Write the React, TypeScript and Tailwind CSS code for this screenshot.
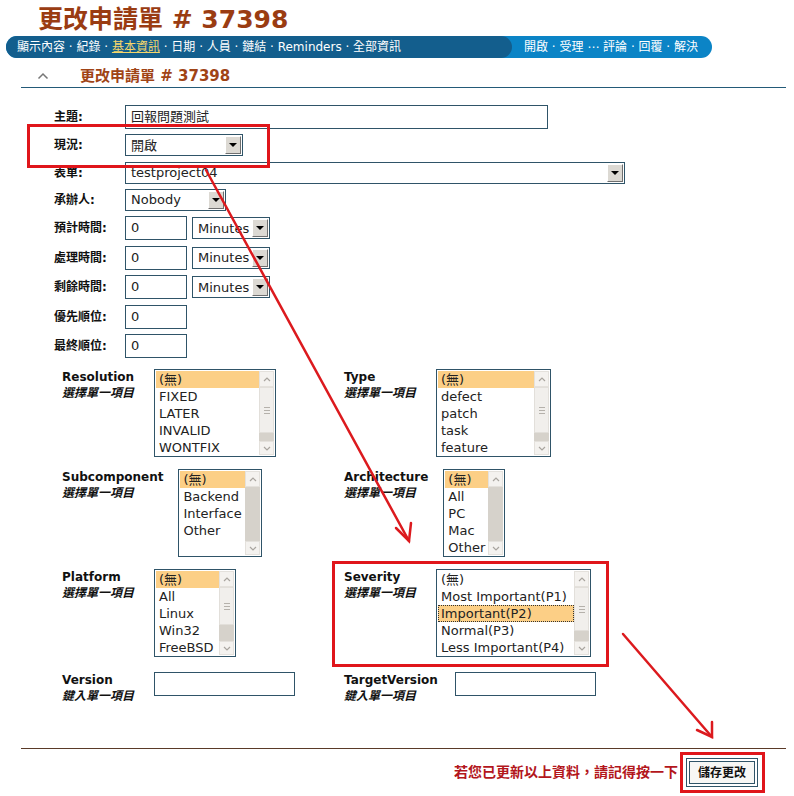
import React from 'react';

const FONT = 'font-[family-name:DejaVu_Sans,Noto_Sans_CJK_TC,sans-serif]';

function DropBtn() {
  return (
    <span className="flex h-[18px] w-[16px] shrink-0 items-center justify-center border border-t-white border-l-white border-r-[#6f6f6f] border-b-[#6f6f6f] bg-[#dcd9d3]">
      <span className="h-0 w-0 border-x-[4px] border-t-[4px] border-x-transparent border-t-black" />
    </span>
  );
}

function Select({ value, w }: { value: string; w: string }) {
  return (
    <div className={`flex h-[22px] items-center justify-between border border-[#2f5468] bg-white pl-[5px] pr-[1px] text-[13px] text-[#222] ${w}`}>
      <span className="leading-none">{value}</span>
      <DropBtn />
    </div>
  );
}

function TextBox({ value = '', w, h = 'h-[24px]' }: { value?: string; w: string; h?: string }) {
  return (
    <div className={`flex items-center border border-[#2f5468] bg-white pl-[5px] text-[13px] text-[#222] ${w} ${h}`}>
      {value}
    </div>
  );
}

type ListProps = {
  items: string[];
  w: string;
  sel?: number;
  dotted?: boolean;
  thumb?: string;
};

function ListBox({ items, w, sel = 0, dotted = false, thumb }: ListProps) {
  return (
    <div className={`flex h-[88px] shrink-0 border border-[#2f5468] bg-white p-px ${w}`}>
      <div className="flex min-w-0 flex-1 flex-col text-[13px] leading-[17px] text-[#222]">
        {items.map((it, i) => (
          <div
            key={it}
            className={`whitespace-nowrap pl-[3px] ${i === sel ? 'bg-[#fccf86]' : ''} ${i === sel && dotted ? 'outline-1 outline-dotted outline-[#333] -outline-offset-1' : ''}`}
          >
            {it}
          </div>
        ))}
      </div>
      <div className="flex w-[15px] shrink-0 flex-col bg-[#d6d2cb]">
        <div className="flex h-[16px] items-center justify-center border border-[#e4e1dc] bg-[#f4f2ef]">
          <svg width="8" height="5" viewBox="0 0 8 5"><path d="M1 4 L4 1 L7 4" fill="none" stroke="#a9a59f" strokeWidth="1.2" /></svg>
        </div>
        {thumb && (
          <div className={`flex flex-col items-center justify-center gap-[2px] border border-[#e2dfda] bg-[#f1efec] ${thumb}`}>
            <span className="h-px w-[6px] bg-[#b5b1ab]" />
            <span className="h-px w-[6px] bg-[#b5b1ab]" />
            <span className="h-px w-[6px] bg-[#b5b1ab]" />
          </div>
        )}
        <div className="flex-1" />
        <div className="flex h-[14px] items-center justify-center border border-[#e4e1dc] bg-[#f4f2ef]">
          <svg width="8" height="5" viewBox="0 0 8 5"><path d="M1 1 L4 4 L7 1" fill="none" stroke="#a9a59f" strokeWidth="1.2" /></svg>
        </div>
      </div>
    </div>
  );
}

function FieldLabel({ title, sub }: { title: string; sub: string }) {
  return (
    <div className="min-w-[77px] whitespace-nowrap text-[12px] font-bold leading-[16px] text-[#111]">
      <div>{title}</div>
      <div className="italic">{sub}</div>
    </div>
  );
}

const rows = [
  { label: '主題:', h: 'h-[28px]', ctl: <TextBox value="回報問題測試" w="w-[423px]" /> },
  { label: '現況:', h: 'h-[28px]', ctl: <Select value="開啟" w="w-[118px]" /> },
  { label: '表單:', h: 'h-[27px]', ctl: <Select value="testproject04" w="w-[500px]" /> },
  { label: '承辦人:', h: 'h-[27px]', ctl: <Select value="Nobody" w="w-[101px]" /> },
  { label: '預計時間:', h: 'h-[30px]', ctl: 'time' },
  { label: '處理時間:', h: 'h-[29px]', ctl: 'time' },
  { label: '剩餘時間:', h: 'h-[30px]', ctl: 'time' },
  { label: '優先順位:', h: 'h-[29px]', ctl: <TextBox value="0" w="w-[62px]" /> },
  { label: '最終順位:', h: 'h-[29px]', ctl: <TextBox value="0" w="w-[62px]" /> },
];

export default function App() {
  return (
    <div className={`relative h-[796px] w-[794px] overflow-hidden bg-white ${FONT}`}>
      {/* title */}
      <h1 className="pl-[38px] pt-[5px] text-[25px] font-bold leading-[30px] text-[#9a3c12]">更改申請單 # 37398</h1>

      {/* nav bar */}
      <div className="ml-[6px] mt-[1px] flex h-[22px] w-[706px] rounded-full bg-[#0b84c6] text-[12px] leading-[22px] text-white">
        <div className="w-[506px] rounded-full bg-[#135e8d] pl-[11px]">
          顯示內容 · 紀錄 · <span className="text-[#f6d66a] underline">基本資訊</span> · 日期 · 人員 · 鏈結 · Reminders · 全部資訊
        </div>
        <div className="pl-[12px]">開啟 · 受理 ⋯ 評論 · 回覆 · 解決</div>
      </div>

      {/* sub heading */}
      <div className="ml-[21px] mt-[3px] flex h-[27px] w-[765px] items-end border-b border-[#235a78] pb-px">
        <svg width="12" height="8" viewBox="0 0 12 8" className="mb-[6px] ml-[16px]">
          <path d="M1.5 6.5 L6 2 L10.5 6.5" fill="none" stroke="#777" strokeWidth="1.5" />
        </svg>
        <span className="ml-[31px] text-[15px] font-bold leading-[20px] text-[#a04416]">更改申請單 # 37398</span>
      </div>

      {/* main fields */}
      <div className="mt-[15px] pl-[54px]">
        {rows.map(r => (
          <div key={r.label} className={`flex items-center ${r.h}`}>
            <div className="w-[71px] text-[12px] font-bold text-[#111]">{r.label}</div>
            {r.ctl === 'time' ? (
              <div className="flex items-center gap-[5px]">
                <TextBox value="0" w="w-[62px]" />
                <Select value="Minutes" w="w-[78px]" />
              </div>
            ) : (
              r.ctl
            )}
          </div>
        ))}
      </div>

      {/* custom fields */}
      <div className="mt-[9px] grid grid-cols-[282px_1fr] gap-y-[12px] pl-[62px]">
        <div className="flex gap-[15px]">
          <FieldLabel title="Resolution" sub="選擇單一項目" />
          <ListBox w="w-[122px]" items={['(無)', 'FIXED', 'LATER', 'INVALID', 'WONTFIX']} thumb="h-[46px]" />
        </div>
        <div className="flex gap-[15px]">
          <FieldLabel title="Type" sub="選擇單一項目" />
          <ListBox w="w-[115px]" items={['(無)', 'defect', 'patch', 'task', 'feature']} thumb="h-[46px]" />
        </div>

        <div className="flex gap-[15px]">
          <FieldLabel title="Subcomponent" sub="選擇單一項目" />
          <ListBox w="w-[84px]" items={['(無)', 'Backend', 'Interface', 'Other']} />
        </div>
        <div className="flex gap-[15px]">
          <FieldLabel title="Architecture" sub="選擇單一項目" />
          <ListBox w="w-[62px]" items={['(無)', 'All', 'PC', 'Mac', 'Other']} />
        </div>

        <div className="flex gap-[15px]">
          <FieldLabel title="Platform" sub="選擇單一項目" />
          <ListBox w="w-[82px]" items={['(無)', 'All', 'Linux', 'Win32', 'FreeBSD']} thumb="h-[38px]" />
        </div>
        <div className="flex gap-[15px]">
          <FieldLabel title="Severity" sub="選擇單一項目" />
          <ListBox
            w="w-[155px]"
            sel={2}
            dotted
            items={['(無)', 'Most Important(P1)', 'Important(P2)', 'Normal(P3)', 'Less Important(P4)']}
            thumb="h-[44px]"
          />
        </div>

        <div className="mt-[3px] flex gap-[15px]">
          <FieldLabel title="Version" sub="鍵入單一項目" />
          <TextBox w="w-[141px]" />
        </div>
        <div className="mt-[3px] flex gap-[17px]">
          <FieldLabel title="TargetVersion" sub="鍵入單一項目" />
          <TextBox w="w-[141px]" />
        </div>
      </div>

      {/* footer */}
      <div className="ml-[21px] mt-[44px] w-[765px] border-t border-[#5a3a28]" />
      <div className="mr-[36px] mt-[9px] flex items-center justify-end gap-[8px]">
        <span className="text-[14px] font-bold text-[#b3161c]">若您已更新以上資料，請記得按一下</span>
        <button className="h-[29px] w-[72px] border border-[#2f5468] bg-white p-[2px]">
          <span className="flex h-full w-full items-center justify-center border border-[#2f5468] bg-[#f7f7f5] text-[12px] font-bold text-[#111]">
            儲存更改
          </span>
        </button>
      </div>

      {/* annotations */}
      <div className="absolute left-[27px] top-[124px] h-[44px] w-[243px] border-[3px] border-[#e0161b]" />
      <div className="absolute left-[332px] top-[561px] h-[106px] w-[277px] border-[3px] border-[#e0161b]" />
      <div className="absolute left-[680px] top-[752px] h-[41px] w-[85px] border-[3px] border-[#e0161b]" />
      <svg className="pointer-events-none absolute left-0 top-0" width="794" height="796" viewBox="0 0 794 796">
        <g fill="none" stroke="#dc1a1e" strokeWidth="2.5" strokeLinecap="round">
          <path d="M206 170 L409 541" />
          <path d="M396 528 L409 541 L411 523" />
          <path d="M623 634 L712 737" />
          <path d="M697 730 L712 737 L712 722" />
        </g>
      </svg>
    </div>
  );
}
